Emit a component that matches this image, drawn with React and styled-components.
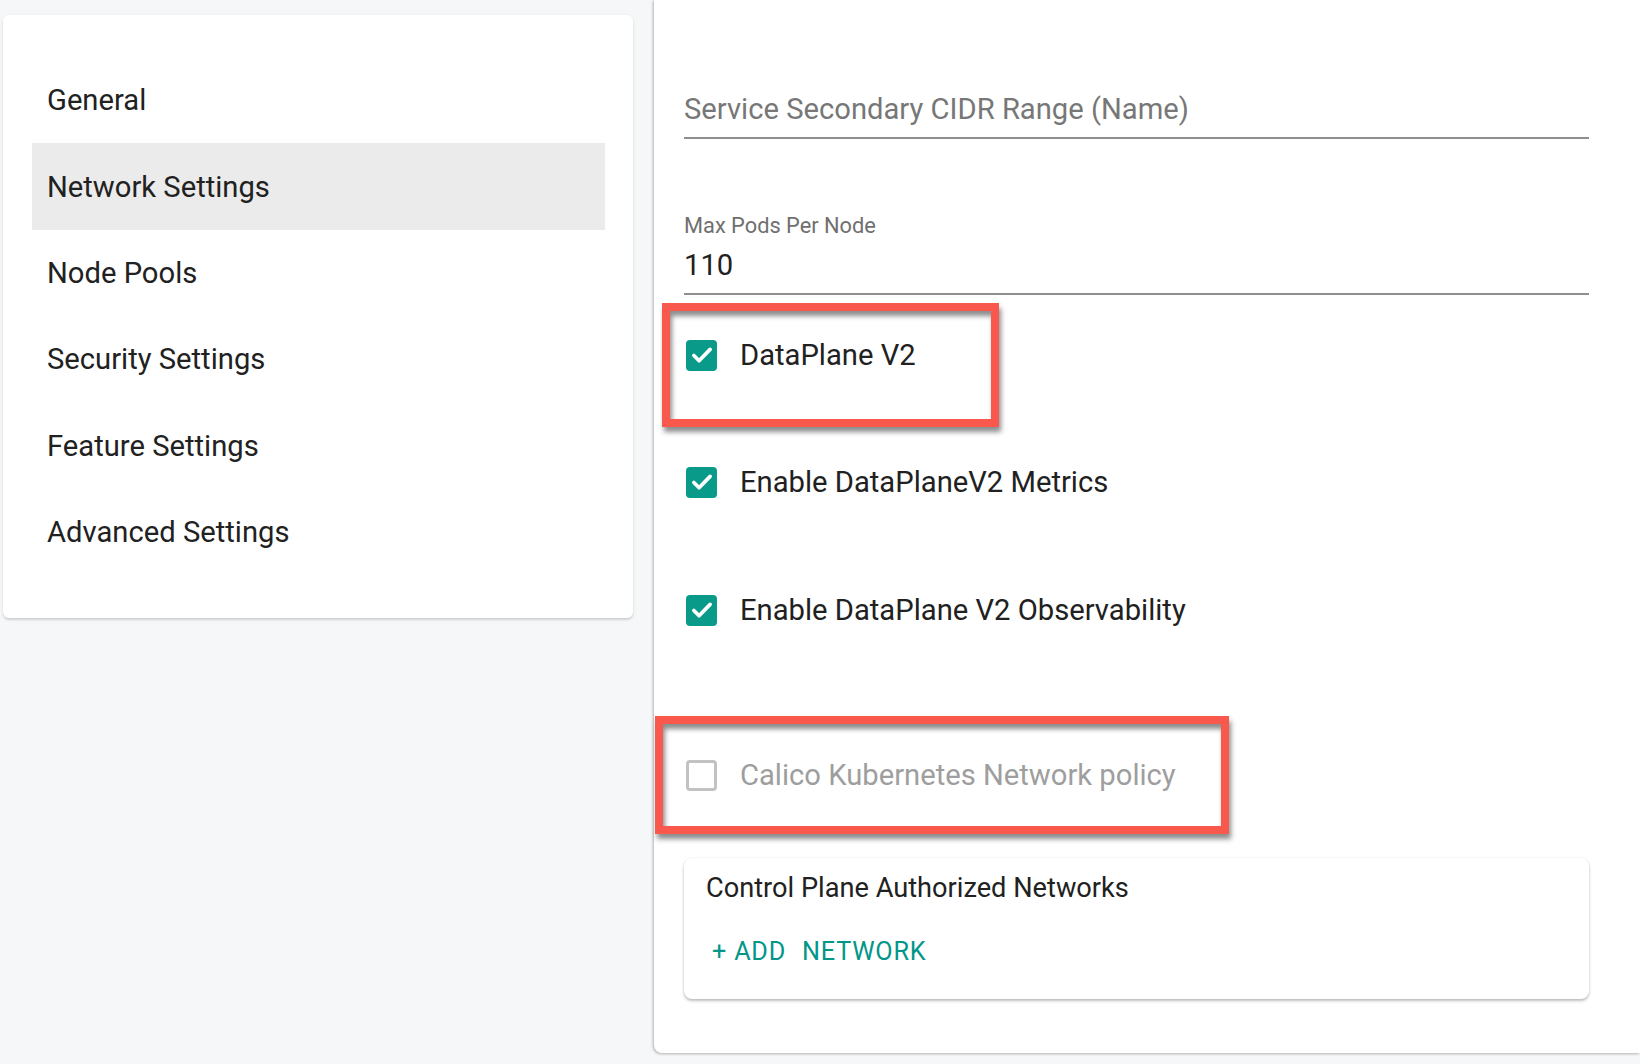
import React from 'react';
import styled, { createGlobalStyle } from 'styled-components';

const GlobalStyle = createGlobalStyle`
  html, body {
    margin: 0;
    padding: 0;
    background: #f6f7f9;
    font-family: Roboto, 'Liberation Sans', sans-serif;
    overflow: hidden;
  }
`;

const Page = styled.div`
  display: flex;
  align-items: flex-start;
  width: 1640px;
  height: 1064px;
  overflow: hidden;
`;

const SideCard = styled.nav`
  margin: 15px 0 0 3px;
  width: 630px;
  box-sizing: border-box;
  padding: 42px 28px 43px 29px;
  background: #fff;
  border-radius: 6px;
  box-shadow: 0 2px 2px rgba(0, 0, 0, 0.12), 0 1px 5px rgba(0, 0, 0, 0.06);
`;

const NavItem = styled.div`
  height: 86.4px;
  display: flex;
  align-items: center;
  padding-left: 15px;
  font-size: 29.2px;
  color: #212121;
  background: ${(p) => (p.$active ? '#ebebeb' : 'transparent')};
`;

const Panel = styled.main`
  margin-left: 21px;
  flex: 1;
  min-height: 1053px;
  box-sizing: border-box;
  padding: 58px 51px 54px 30px;
  background: #fff;
  border-radius: 0 0 0 8px;
  box-shadow: -1px 1px 3px rgba(0, 0, 0, 0.28);
`;

const Field = styled.div`
  margin-top: ${(p) => p.$mt || 0}px;
  display: flex;
  flex-direction: column;
`;

const FieldLabel = styled.div`
  height: 24px;
  line-height: 24px;
  margin-bottom: 7px;
  font-size: 21.8px;
  color: #6f6f6f;
`;

const FieldInput = styled.div`
  height: 40px;
  line-height: 40px;
  padding-bottom: 8px;
  border-bottom: 2px solid #8f8f8f;
  font-size: 29.2px;
  color: ${(p) => (p.$placeholder ? '#777' : '#212121')};
`;

const CheckRow = styled.label`
  position: relative;
  margin-top: ${(p) => p.$mt}px;
  height: 64px;
  display: flex;
  align-items: center;
  gap: 23px;
  padding-left: 2px;
  font-size: 29.2px;
  color: ${(p) => (p.$disabled ? '#9e9e9e' : '#212121')};
`;

const Box = styled.span`
  width: 31px;
  height: 31px;
  box-sizing: border-box;
  border-radius: 4px;
  display: flex;
  align-items: center;
  justify-content: center;
  background: ${(p) => (p.$checked ? '#0a9a8a' : '#fff')};
  border: ${(p) => (p.$checked ? 'none' : '3.5px solid #c2c2c2')};
`;

const Callout = styled.span`
  position: absolute;
  left: ${(p) => p.$left}px;
  top: ${(p) => p.$top}px;
  width: ${(p) => p.$w}px;
  height: ${(p) => p.$h}px;
  box-sizing: border-box;
  border: 8px solid #f8594c;
  box-shadow: 2px 5px 5px rgba(0, 0, 0, 0.45), inset 2px 5px 5px rgba(0, 0, 0, 0.45);
  pointer-events: none;
`;

const NetCard = styled.section`
  margin-top: 51px;
  padding: 13px 22px 30px 22px;
  background: #fff;
  border-radius: 8px;
  box-shadow: 0 2px 3px rgba(0, 0, 0, 0.25), 0 0 2px rgba(0, 0, 0, 0.08);
`;

const CardTitle = styled.div`
  font-size: 27.2px;
  line-height: 34px;
  color: #212121;
`;

const AddButton = styled.button`
  margin-top: 30px;
  padding: 0 0 0 6px;
  border: none;
  background: none;
  display: flex;
  gap: 16px;
  font-family: Roboto, 'Liberation Sans', sans-serif;
  font-size: 25.2px;
  line-height: 34px;
  letter-spacing: 0.8px;
  text-transform: uppercase;
  color: #009688;
  cursor: pointer;
`;

const Check = () => (
  <svg width="26" height="26" viewBox="0 0 24 24">
    <path d="M4.5 12.5l4.8 4.8L19.5 6.8" fill="none" stroke="#fff" strokeWidth="3.4" strokeLinecap="round" strokeLinejoin="round" />
  </svg>
);

const navItems = [
  'General',
  'Network Settings',
  'Node Pools',
  'Security Settings',
  'Feature Settings',
  'Advanced Settings',
];

export default function App() {
  return (
    <>
      <GlobalStyle />
      <Page>
        <SideCard>
          {navItems.map((n) => (
            <NavItem key={n} $active={n === 'Network Settings'}>
              {n}
            </NavItem>
          ))}
        </SideCard>

        <Panel>
          <Field>
            <FieldLabel />
            <FieldInput $placeholder>Service Secondary CIDR Range (Name)</FieldInput>
          </Field>

          <Field $mt={75}>
            <FieldLabel>Max Pods Per Node</FieldLabel>
            <FieldInput>110</FieldInput>
          </Field>

          <CheckRow $mt={28}>
            <Box $checked><Check /></Box>
            DataPlane V2
            <Callout $left={-22} $top={-20} $w={337} $h={124} />
          </CheckRow>

          <CheckRow $mt={63}>
            <Box $checked><Check /></Box>
            Enable DataPlaneV2 Metrics
          </CheckRow>

          <CheckRow $mt={64}>
            <Box $checked><Check /></Box>
            Enable DataPlane V2 Observability
          </CheckRow>

          <CheckRow $mt={101} $disabled>
            <Box />
            Calico Kubernetes Network policy
            <Callout $left={-29} $top={-27} $w={574} $h={118} />
          </CheckRow>

          <NetCard>
            <CardTitle>Control Plane Authorized Networks</CardTitle>
            <AddButton>
              <span>+ Add</span>
              <span>Network</span>
            </AddButton>
          </NetCard>
        </Panel>
      </Page>
    </>
  );
}
